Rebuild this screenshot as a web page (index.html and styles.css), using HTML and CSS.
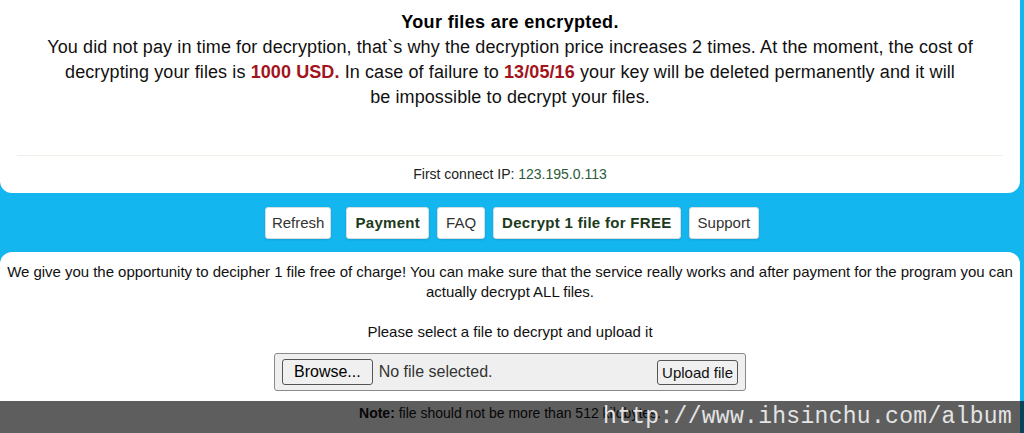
FILE: index.html
```html
<!DOCTYPE html>
<html>
<head>
    <meta charset="UTF-8">
    <meta name="viewport" content="width=device-width, initial-scale=1.0">
    <title>Decrypt 1 file for FREE</title>
    <link rel="stylesheet" href="styles.css">
</head>

<body>
    <div class="card top-card">
        <h1 class="title">Your files are encrypted.</h1>
        <p class="warning">
            You did not pay in time for decryption, that`s why the decryption price increases 2 times. At the moment, the cost of<br>
            decrypting your files is <span class="red">1000 USD.</span> In case of failure to <span class="red">13/05/16</span> your key will be deleted permanently and it will<br>
            be impossible to decrypt your files.
        </p>
        <hr class="sep">
        <div class="ip">First connect IP: <span class="ip-value">123.195.0.113</span></div>
    </div>

    <!-- menu -->
    <div class="menu">
        <a class="btn first" href="#">Refresh</a>
        <a class="btn bold" href="#">Payment</a>
        <a class="btn" href="#">FAQ</a>
        <a class="btn bold" href="#">Decrypt 1 file for FREE</a>
        <a class="btn" href="#">Support</a>
    </div>

    <div class="card bottom-card">
        <p class="intro">We give you the opportunity to decipher 1 file free of charge! You can make sure that the service really works and after payment for the program you can<br>actually decrypt ALL files.</p>
        <p class="select">Please select a file to decrypt and upload it</p>
        <form class="upload" onsubmit="return false">
            <span class="file-btn">Browse...</span>
            <span class="file-name">No file selected.</span>
            <button type="submit" class="upload-btn">Upload file</button>
        </form>
        <p class="note"><b>Note:</b> file should not be more than 512 kilobytes.</p>
    </div>

    <div class="watermark">http://www.ihsinchu.com/album</div>
</body>
</html>
```

FILE: styles.css
```css
body {
    font-family: "Liberation Sans", Arial, sans-serif;
    margin: 0;
    padding: 0;
    background-color: #14b6f0;
    color: #111;
    overflow: hidden;
}

.card {
    background-color: #fff;
    margin: 0 4px 0 0;
}

.top-card {
    border-radius: 0 0 12px 12px;
    padding: 10px 17px 10px 17px;
    text-align: center;
}

.title {
    font-size: 18px;
    line-height: 25px;
    margin: 0;
    color: #000;
    letter-spacing: 0.35px;
}

.warning {
    font-size: 18px;
    line-height: 25px;
    margin: 0;
    letter-spacing: 0.1px;
}

.red {
    color: #a3141c;
    font-weight: bold;
}

.sep {
    border: none;
    border-top: 1px solid #f2eee8;
    margin: 45px 0 9px 0;
}

.ip {
    font-size: 14px;
    line-height: 18px;
    color: #222;
}

.ip-value {
    color: #2c5a3a;
}

.menu {
    display: flex;
    justify-content: center;
    gap: 8px;
    padding: 14px 0 13px 0;
}

.btn {
    display: block;
    background-color: #fff;
    border: 1px solid #d8dde0;
    border-radius: 3px;
    box-shadow: 0 1px 2px rgba(0, 0, 0, 0.12);
    padding: 0 8px;
    height: 30px;
    line-height: 30px;
    font-size: 15px;
    color: #333;
    text-decoration: none;
}

.btn.first {
    padding: 0 6px;
    margin-right: 7px;
}

.btn.bold {
    font-weight: bold;
    color: #1c3a1c;
    letter-spacing: 0.3px;
}

.bottom-card {
    border-radius: 12px 12px 0 0;
    padding: 10px 0 20px 0;
    text-align: center;
    font-size: 15px;
    color: #111;
}

.intro {
    margin: 0;
    line-height: 20px;
    letter-spacing: -0.03px;
}

.select {
    margin: 20px 0 0 0;
    line-height: 20px;
}

.upload {
    display: flex;
    align-items: center;
    width: 472px;
    height: 38px;
    margin: 11px auto 0 auto;
    padding: 0 7px;
    box-sizing: border-box;
    background-color: #efefef;
    border: 1px solid #8a8a8a;
    border-radius: 3px;
    text-align: left;
}

.file-btn {
    border: 1px solid #555;
    border-radius: 3px;
    background-color: #f0f0f0;
    padding: 3px 11px;
    font-size: 16px;
    line-height: 18px;
    color: #000;
}

.file-name {
    flex: 1;
    margin-left: 6px;
    font-size: 16px;
    color: #333;
}

.upload-btn {
    border: 1px solid #555;
    border-radius: 3px;
    background-color: #f0f0f0;
    padding: 2px 4px;
    font-family: "Liberation Sans", Arial, sans-serif;
    font-size: 15px;
    line-height: 19px;
    color: #111;
}

.note {
    margin: 12px 0 0 0;
    line-height: 20px;
    font-size: 14px;
}

/* watermark band over the bottom of the picture */
.watermark {
    position: absolute;
    left: 0;
    right: 0;
    top: 401px;
    height: 32px;
    background-color: rgba(0, 0, 0, 0.63);
    color: #e4e4e4;
    font-family: "Liberation Mono", "Courier New", monospace;
    font-size: 23px;
    line-height: 32px;
    text-align: right;
    padding-right: 12px;
    letter-spacing: 0.3px;
}
```
